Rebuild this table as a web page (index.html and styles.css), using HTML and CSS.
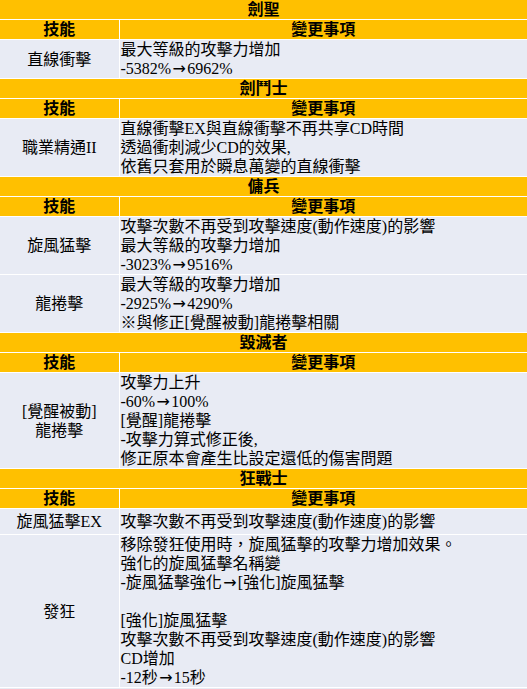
FILE: index.html
```html
<!DOCTYPE html>
<html lang="zh-Hant">
<head>
<meta charset="utf-8">
<link rel="stylesheet" href="styles.css">
</head>
<body>
<table class="changes">
  <colgroup><col class="c-skill"><col class="c-note"></colgroup>
  <tr class="cls"><td colspan="2">劍聖</td></tr>
  <tr class="hd"><td>技能</td><td>變更事項</td></tr>
  <tr class="r2"><td class="sk">直線衝擊</td><td class="nt">最大等級的攻擊力增加<br>-5382%<span class="arr">→</span>6962%</td></tr>

  <tr class="cls"><td colspan="2">劍鬥士</td></tr>
  <tr class="hd"><td>技能</td><td>變更事項</td></tr>
  <tr class="r3"><td class="sk">職業精通II</td><td class="nt">直線衝擊EX與直線衝擊不再共享CD時間<br>透過衝刺減少CD的效果,<br>依舊只套用於瞬息萬變的直線衝擊</td></tr>

  <tr class="cls"><td colspan="2">傭兵</td></tr>
  <tr class="hd"><td>技能</td><td>變更事項</td></tr>
  <tr class="r3"><td class="sk">旋風猛擊</td><td class="nt">攻擊次數不再受到攻擊速度(動作速度)的影響<br>最大等級的攻擊力增加<br>-3023%<span class="arr">→</span>9516%</td></tr>
  <tr class="r3"><td class="sk">龍捲擊</td><td class="nt">最大等級的攻擊力增加<br>-2925%<span class="arr">→</span>4290%<br>※與修正[覺醒被動]龍捲擊相關</td></tr>

  <tr class="cls"><td colspan="2">毀滅者</td></tr>
  <tr class="hd"><td>技能</td><td>變更事項</td></tr>
  <tr class="r5"><td class="sk">[覺醒被動]<br>龍捲擊</td><td class="nt">攻擊力上升<br>-60%<span class="arr">→</span>100%<br>[覺醒]龍捲擊<br>-攻擊力算式修正後,<br>修正原本會產生比設定還低的傷害問題</td></tr>

  <tr class="cls"><td colspan="2">狂戰士</td></tr>
  <tr class="hd"><td>技能</td><td>變更事項</td></tr>
  <tr class="r1"><td class="sk">旋風猛擊EX</td><td class="nt">攻擊次數不再受到攻擊速度(動作速度)的影響</td></tr>
  <tr class="r8"><td class="sk">發狂</td><td class="nt">移除發狂使用時，旋風猛擊的攻擊力增加效果。<br>強化的旋風猛擊名稱變<br>-旋風猛擊強化<span class="arr">→</span>[強化]旋風猛擊<br><br>[強化]旋風猛擊<br>攻擊次數不再受到攻擊速度(動作速度)的影響<br>CD增加<br>-12秒<span class="arr">→</span>15秒</td></tr>
</table>
</body>
</html>
```
FILE: styles.css
```css
html, body {
  margin: 0;
  padding: 0;
  background: #e8ebf4;
}
.changes {
  width: 527px;
  border-collapse: collapse;
  table-layout: fixed;
  font-family: "Liberation Serif", "Noto Sans CJK TC", serif;
  font-size: 16px;
  line-height: 19px;
  color: #000;
}
.c-skill { width: 119px; }
.changes td {
  padding: 0;
  border-bottom: 1px solid #fff;
}
.cls td {
  background: #ffc000;
  text-align: center;
  font-weight: bold;
  height: 19px;
}
.hd td {
  background: #ffc000;
  text-align: center;
  font-weight: bold;
  height: 19px;
}
.hd td:first-child,
.changes td.sk {
  border-right: 1px solid #fff;
}
.sk {
  background: #e8ebf4;
  text-align: center;
  vertical-align: middle;
}
.nt {
  background: #e8ebf4;
  text-align: left;
  vertical-align: top;
  padding-left: 1px !important;
  white-space: nowrap;
}
.arr {
  display: inline-block;
  width: 16px;
  text-align: center;
  font-family: "DejaVu Sans", sans-serif;
  font-size: 16px;
  line-height: 1;
}
.r1 td { height: 25px; vertical-align: middle; }
```
